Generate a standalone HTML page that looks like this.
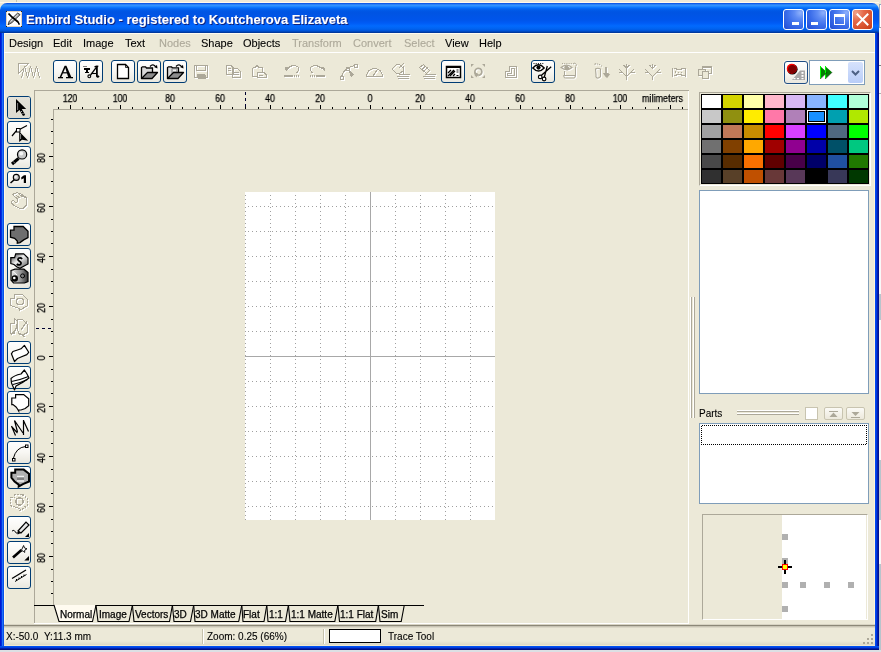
<!DOCTYPE html><html><head><meta charset="utf-8"><title>Embird</title><style>
*{margin:0;padding:0;box-sizing:border-box}
html,body{width:881px;height:652px;overflow:hidden;background:#ECE9D8;font-family:"Liberation Sans",sans-serif;font-size:11px;color:#000}
.a{position:absolute}
.t{position:absolute;white-space:nowrap;line-height:1;will-change:transform;-webkit-text-stroke:0.1px currentColor}
#title{position:absolute;left:0;top:3px;width:879px;height:30px;border-radius:7px 7px 0 0;
background:linear-gradient(to bottom,#0048e0 0px,#3593ff 2px,#288eff 3px,#127dff 4px,#036ffc 5px,#0262ee 6px,#0057e5 8px,#0054e3 10px,#0055eb 17px,#005bf5 20px,#026afe 23px,#0062ef 26px,#0052d6 28px,#0040ab 29px,#003092 30px)}
.wb{position:absolute;top:9px;width:21px;height:21px;border:1px solid #fff;border-radius:3px;
background:radial-gradient(circle at 85% 15%,#8EB0FB 0,#5F8CF4 25%,#3D6FEA 55%,#2A58DC 85%,#1E48CC 100%)}
.wc{background:radial-gradient(circle at 15% 15%,#F2A38A 0,#E5694A 35%,#D8502C 70%,#C23C18 100%)}
.dis{color:#ACA899}
.tb{position:absolute;top:60px;width:24px;height:23px;border:1px solid #003C74;border-radius:3px;background:linear-gradient(#FFFFFF,#F8F7F3 50%,#E9E7DE)}
.lb{position:absolute;left:7px;width:24px;border:1px solid #003C74;border-radius:3px;background:linear-gradient(#FFFFFF,#F8F7F3 50%,#E9E7DE)}
svg{position:absolute;overflow:visible}
.rt{position:absolute;font-size:10px;line-height:1;white-space:nowrap;-webkit-text-stroke:0.25px #000;will-change:transform}
.tab{position:absolute;top:610px;font-size:10px;line-height:1;white-space:nowrap;-webkit-text-stroke:0.25px #000;will-change:transform}
</style></head><body>
<div class="a" style="left:0;top:2px;width:879px;height:1px;background:#FFF8EA"></div>
<div class="a" style="left:16px;top:0;width:1px;height:2px;background:#C8C4B0"></div>
<div class="a" style="left:879px;top:0;width:2px;height:652px;background:#F8F8F8"></div>
<div class="a" style="left:879px;top:294px;width:2px;height:26px;background:#B8C4CC"></div>
<div class="a" style="left:879px;top:460px;width:2px;height:60px;background:#B8C4CC"></div>
<div class="a" style="left:879px;top:564px;width:2px;height:88px;background:#B8C4CC"></div>
<div class="a" style="left:879px;top:65px;width:2px;height:1px;background:#808080"></div>
<div class="a" style="left:879px;top:93px;width:2px;height:1px;background:#B0B0B0"></div>
<div class="a" style="left:879px;top:0;width:2px;height:4px;background:#ECE9D8"></div>
<div class="a" style="left:879px;top:4px;width:2px;height:1px;background:#8EA4C4"></div>
<div class="a" style="left:879px;top:5px;width:2px;height:22px;background:#FFFFFF;border-left:1px solid #98A8C0"></div>
<div class="a" style="left:879px;top:27px;width:2px;height:1px;background:#A0A0A0"></div>
<div class="a" style="left:0;top:650px;width:881px;height:2px;background:#DCE0E4"></div>
<div id="title"></div>
<div class="a" style="left:0;top:33px;width:4px;height:617px;background:linear-gradient(to right,#0018D0 0,#0018D0 1px,#0030E0 1px,#0030E0 2px,#2070F8 2px,#2070F8 3px,#0850E8 3px)"></div>
<div class="a" style="left:875px;top:33px;width:4px;height:617px;background:linear-gradient(to right,#0048F0 0,#0048F0 1px,#0038E0 1px,#0038E0 2px,#0020B0 2px,#0020B0 3px,#001090 3px)"></div>
<div class="a" style="left:0;top:646px;width:879px;height:4px;background:linear-gradient(to bottom,#0050F0 0,#0050F0 1px,#0040E0 1px,#0040E0 2px,#0020B0 2px,#0020B0 3px,#001080 3px)"></div>
<div class="a" style="left:4px;top:33px;width:871px;height:613px;background:#ECE9D8"></div>
<div class="a" style="left:4px;top:33px;width:871px;height:1px;background:#FFFBF0"></div>
<div class="a" style="left:4px;top:33px;width:1px;height:613px;background:#FFF8E4"></div>
<div class="a" style="left:874px;top:33px;width:1px;height:613px;background:#FFF4D8"></div>
<div class="a" style="left:6px;top:11px;width:16px;height:16px;background:#fff;border:1px solid #E4D4BC"></div>
<svg style="left:0;top:0" width="40" height="40"><g fill="#202020"><rect x="6" y="11" width="1" height="1"/><rect x="21" y="11" width="1" height="1"/><rect x="6" y="26" width="1" height="1"/><rect x="21" y="26" width="1" height="1"/></g><path d="M8,24.8 L9.2,21.2 L17.6,13.1 L20.2,14.6 L12,22.6 Z" fill="#A0A0A0" stroke="#202020" stroke-width="0.8"/><path d="M10.5,21.5 L18,14.5" stroke="#F0F0F0" stroke-width="0.9"/><path d="M8.5,13.5 Q12,17.5 15.2,19.6 Q18.6,21.6 19.3,24.6" fill="none" stroke="#000" stroke-width="1.8"/></svg>
<div class="t" style="left:26px;top:13px;color:#fff;font-weight:bold;font-size:13px;text-shadow:1px 1px 0 #0F1F78">Embird Studio - registered to Koutcherova Elizaveta</div>
<div class="wb" style="left:783px"></div>
<div class="wb" style="left:806px"></div>
<div class="wb" style="left:829px"></div>
<div class="wb wc" style="left:852px"></div>
<div class="a" style="left:792px;top:22px;width:7px;height:3px;background:#fff"></div>
<div class="a" style="left:811px;top:22px;width:7px;height:3px;background:#fff"></div>
<div class="a" style="left:834px;top:14px;width:11px;height:11px;border:1px solid #fff;border-top-width:3px"></div>
<svg style="left:852px;top:9px" width="21" height="21"><path d="M5.5,5.5 L15.5,15.5 M15.5,5.5 L5.5,15.5" stroke="#fff" stroke-width="2" stroke-linecap="square"/></svg>
<div class="t" style="left:9px;top:38px;font-size:11px;color:#000">Design</div>
<div class="t" style="left:53px;top:38px;font-size:11px;color:#000">Edit</div>
<div class="t" style="left:83px;top:38px;font-size:11px;color:#000">Image</div>
<div class="t" style="left:125px;top:38px;font-size:11px;color:#000">Text</div>
<div class="t" style="left:159px;top:38px;font-size:11px;color:#ACA899">Nodes</div>
<div class="t" style="left:201px;top:38px;font-size:11px;color:#000">Shape</div>
<div class="t" style="left:243px;top:38px;font-size:11px;color:#000">Objects</div>
<div class="t" style="left:292px;top:38px;font-size:11px;color:#ACA899">Transform</div>
<div class="t" style="left:353px;top:38px;font-size:11px;color:#ACA899">Convert</div>
<div class="t" style="left:404px;top:38px;font-size:11px;color:#ACA899">Select</div>
<div class="t" style="left:445px;top:38px;font-size:11px;color:#000">View</div>
<div class="t" style="left:479px;top:38px;font-size:11px;color:#000">Help</div>
<div class="a" style="left:4px;top:52px;width:871px;height:1px;background:#FFFFFF"></div>
<div class="tb" style="left:53px"></div>
<div class="tb" style="left:79px"></div>
<div class="tb" style="left:111px"></div>
<div class="tb" style="left:137px"></div>
<div class="tb" style="left:163px"></div>
<div class="tb" style="left:441px"></div>
<div class="tb" style="left:531px"></div>
<div class="tb" style="left:784px;top:61px;width:24px;height:23px;border-color:#1F4E85;box-shadow:0 0 0 1px #F4F2EA"></div>
<div class="a" style="left:809px;top:60px;width:56px;height:25px;background:#fff;border:1px solid #7F9DB9"></div>
<div class="a" style="left:848px;top:62px;width:15px;height:21px;border-radius:2px;background:linear-gradient(#D6E2FC,#B9CDF8)"></div>
<svg style="left:848px;top:62px" width="15" height="21"><path d="M4,9 L7.5,12.5 L11,9" stroke="#4D6185" stroke-width="2" fill="none"/></svg>
<svg style="left:0;top:0" width="881" height="100"><path d="M820,66 L827,72.3 L820,78.8 Z M825,66 L832,72.3 L825,78.8 Z" fill="#008000"/><path d="M820.5,66 V78.5 M825.5,66 V78.5" stroke="#00FF00" stroke-width="1"/><path d="M820.5,78.8 L827,72.3 M825.5,78.8 L832,72.3" stroke="#003000" stroke-width="0.8"/></svg>
<svg style="left:0;top:0" width="881" height="100"><path d="M792,80 L800,70.5 H805 V80 Z" fill="#A8A8A8"/><g fill="#fff"><rect x="801.5" y="72" width="2" height="1.8"/><rect x="801.5" y="75" width="2" height="1.8"/><rect x="801.5" y="78" width="2" height="1.2"/><rect x="793.5" y="78" width="2" height="1.2"/><rect x="797" y="78" width="2" height="1.2"/></g><circle cx="792.3" cy="69.2" r="5.3" fill="#000"/><circle cx="791.8" cy="68.7" r="5" fill="#FF0000"/><circle cx="792.3" cy="69.2" r="4.3" fill="#800000"/></svg>
<div class="lb" style="top:96px;height:23px"></div>
<div class="lb" style="top:121px;height:23px"></div>
<div class="lb" style="top:146px;height:23px"></div>
<div class="lb" style="top:171px;height:17px"></div>
<div class="lb" style="top:223px;height:23px"></div>
<div class="lb" style="top:248px;height:41px"></div>
<div class="lb" style="top:341px;height:23px"></div>
<div class="lb" style="top:366px;height:23px"></div>
<div class="lb" style="top:391px;height:23px"></div>
<div class="lb" style="top:416px;height:23px"></div>
<div class="lb" style="top:441px;height:23px"></div>
<div class="lb" style="top:466px;height:23px"></div>
<div class="lb" style="top:516px;height:23px"></div>
<div class="lb" style="top:541px;height:23px"></div>
<div class="lb" style="top:566px;height:23px"></div>
<div class="a" style="left:34px;top:90px;width:655px;height:1px;background:#ACA899"></div>
<div class="a" style="left:34px;top:90px;width:1px;height:533px;background:#ACA899"></div>
<div class="a" style="left:688px;top:91px;width:1px;height:532px;background:#FFFFFF"></div>
<div class="a" style="left:53px;top:109px;width:635px;height:1px;background:#ACA899"></div>
<div class="a" style="left:53px;top:109px;width:1px;height:496px;background:#ACA899"></div>
<div class="a" style="left:58px;top:107px;width:1px;height:2px;background:#000"></div><div class="a" style="left:70px;top:105px;width:1px;height:4px;background:#000"></div><div class="a" style="left:82px;top:107px;width:1px;height:2px;background:#000"></div><div class="a" style="left:95px;top:107px;width:1px;height:2px;background:#000"></div><div class="a" style="left:108px;top:107px;width:1px;height:2px;background:#000"></div><div class="a" style="left:120px;top:105px;width:1px;height:4px;background:#000"></div><div class="a" style="left:132px;top:107px;width:1px;height:2px;background:#000"></div><div class="a" style="left:145px;top:107px;width:1px;height:2px;background:#000"></div><div class="a" style="left:158px;top:107px;width:1px;height:2px;background:#000"></div><div class="a" style="left:170px;top:105px;width:1px;height:4px;background:#000"></div><div class="a" style="left:182px;top:107px;width:1px;height:2px;background:#000"></div><div class="a" style="left:195px;top:107px;width:1px;height:2px;background:#000"></div><div class="a" style="left:208px;top:107px;width:1px;height:2px;background:#000"></div><div class="a" style="left:220px;top:105px;width:1px;height:4px;background:#000"></div><div class="a" style="left:232px;top:107px;width:1px;height:2px;background:#000"></div><div class="a" style="left:245px;top:107px;width:1px;height:2px;background:#000"></div><div class="a" style="left:258px;top:107px;width:1px;height:2px;background:#000"></div><div class="a" style="left:270px;top:105px;width:1px;height:4px;background:#000"></div><div class="a" style="left:282px;top:107px;width:1px;height:2px;background:#000"></div><div class="a" style="left:295px;top:107px;width:1px;height:2px;background:#000"></div><div class="a" style="left:308px;top:107px;width:1px;height:2px;background:#000"></div><div class="a" style="left:320px;top:105px;width:1px;height:4px;background:#000"></div><div class="a" style="left:332px;top:107px;width:1px;height:2px;background:#000"></div><div class="a" style="left:345px;top:107px;width:1px;height:2px;background:#000"></div><div class="a" style="left:358px;top:107px;width:1px;height:2px;background:#000"></div><div class="a" style="left:370px;top:105px;width:1px;height:4px;background:#000"></div><div class="a" style="left:382px;top:107px;width:1px;height:2px;background:#000"></div><div class="a" style="left:395px;top:107px;width:1px;height:2px;background:#000"></div><div class="a" style="left:408px;top:107px;width:1px;height:2px;background:#000"></div><div class="a" style="left:420px;top:105px;width:1px;height:4px;background:#000"></div><div class="a" style="left:432px;top:107px;width:1px;height:2px;background:#000"></div><div class="a" style="left:445px;top:107px;width:1px;height:2px;background:#000"></div><div class="a" style="left:458px;top:107px;width:1px;height:2px;background:#000"></div><div class="a" style="left:470px;top:105px;width:1px;height:4px;background:#000"></div><div class="a" style="left:482px;top:107px;width:1px;height:2px;background:#000"></div><div class="a" style="left:495px;top:107px;width:1px;height:2px;background:#000"></div><div class="a" style="left:508px;top:107px;width:1px;height:2px;background:#000"></div><div class="a" style="left:520px;top:105px;width:1px;height:4px;background:#000"></div><div class="a" style="left:532px;top:107px;width:1px;height:2px;background:#000"></div><div class="a" style="left:545px;top:107px;width:1px;height:2px;background:#000"></div><div class="a" style="left:558px;top:107px;width:1px;height:2px;background:#000"></div><div class="a" style="left:570px;top:105px;width:1px;height:4px;background:#000"></div><div class="a" style="left:582px;top:107px;width:1px;height:2px;background:#000"></div><div class="a" style="left:595px;top:107px;width:1px;height:2px;background:#000"></div><div class="a" style="left:608px;top:107px;width:1px;height:2px;background:#000"></div><div class="a" style="left:620px;top:105px;width:1px;height:4px;background:#000"></div><div class="a" style="left:632px;top:107px;width:1px;height:2px;background:#000"></div><div class="a" style="left:645px;top:107px;width:1px;height:2px;background:#000"></div><div class="a" style="left:658px;top:107px;width:1px;height:2px;background:#000"></div><div class="a" style="left:670px;top:105px;width:1px;height:4px;background:#000"></div><div class="a" style="left:682px;top:107px;width:1px;height:2px;background:#000"></div><div class="a" style="left:51px;top:119px;width:2px;height:1px;background:#000"></div><div class="a" style="left:51px;top:131px;width:2px;height:1px;background:#000"></div><div class="a" style="left:51px;top:143px;width:2px;height:1px;background:#000"></div><div class="a" style="left:49px;top:156px;width:4px;height:1px;background:#000"></div><div class="a" style="left:51px;top:169px;width:2px;height:1px;background:#000"></div><div class="a" style="left:51px;top:181px;width:2px;height:1px;background:#000"></div><div class="a" style="left:51px;top:193px;width:2px;height:1px;background:#000"></div><div class="a" style="left:49px;top:206px;width:4px;height:1px;background:#000"></div><div class="a" style="left:51px;top:219px;width:2px;height:1px;background:#000"></div><div class="a" style="left:51px;top:231px;width:2px;height:1px;background:#000"></div><div class="a" style="left:51px;top:243px;width:2px;height:1px;background:#000"></div><div class="a" style="left:49px;top:256px;width:4px;height:1px;background:#000"></div><div class="a" style="left:51px;top:269px;width:2px;height:1px;background:#000"></div><div class="a" style="left:51px;top:281px;width:2px;height:1px;background:#000"></div><div class="a" style="left:51px;top:293px;width:2px;height:1px;background:#000"></div><div class="a" style="left:49px;top:306px;width:4px;height:1px;background:#000"></div><div class="a" style="left:51px;top:319px;width:2px;height:1px;background:#000"></div><div class="a" style="left:51px;top:331px;width:2px;height:1px;background:#000"></div><div class="a" style="left:51px;top:343px;width:2px;height:1px;background:#000"></div><div class="a" style="left:49px;top:356px;width:4px;height:1px;background:#000"></div><div class="a" style="left:51px;top:369px;width:2px;height:1px;background:#000"></div><div class="a" style="left:51px;top:381px;width:2px;height:1px;background:#000"></div><div class="a" style="left:51px;top:393px;width:2px;height:1px;background:#000"></div><div class="a" style="left:49px;top:406px;width:4px;height:1px;background:#000"></div><div class="a" style="left:51px;top:419px;width:2px;height:1px;background:#000"></div><div class="a" style="left:51px;top:431px;width:2px;height:1px;background:#000"></div><div class="a" style="left:51px;top:443px;width:2px;height:1px;background:#000"></div><div class="a" style="left:49px;top:456px;width:4px;height:1px;background:#000"></div><div class="a" style="left:51px;top:469px;width:2px;height:1px;background:#000"></div><div class="a" style="left:51px;top:481px;width:2px;height:1px;background:#000"></div><div class="a" style="left:51px;top:493px;width:2px;height:1px;background:#000"></div><div class="a" style="left:49px;top:506px;width:4px;height:1px;background:#000"></div><div class="a" style="left:51px;top:519px;width:2px;height:1px;background:#000"></div><div class="a" style="left:51px;top:531px;width:2px;height:1px;background:#000"></div><div class="a" style="left:51px;top:543px;width:2px;height:1px;background:#000"></div><div class="a" style="left:49px;top:556px;width:4px;height:1px;background:#000"></div><div class="a" style="left:51px;top:569px;width:2px;height:1px;background:#000"></div><div class="a" style="left:51px;top:581px;width:2px;height:1px;background:#000"></div><div class="a" style="left:51px;top:593px;width:2px;height:1px;background:#000"></div>
<div class="rt" style="left:40.0px;top:93.5px;width:60px;text-align:center;transform:scaleX(0.88)">120</div>
<div class="rt" style="left:90.0px;top:93.5px;width:60px;text-align:center;transform:scaleX(0.88)">100</div>
<div class="rt" style="left:140.0px;top:93.5px;width:60px;text-align:center;transform:scaleX(0.88)">80</div>
<div class="rt" style="left:190.0px;top:93.5px;width:60px;text-align:center;transform:scaleX(0.88)">60</div>
<div class="rt" style="left:240.0px;top:93.5px;width:60px;text-align:center;transform:scaleX(0.88)">40</div>
<div class="rt" style="left:290.0px;top:93.5px;width:60px;text-align:center;transform:scaleX(0.88)">20</div>
<div class="rt" style="left:340.0px;top:93.5px;width:60px;text-align:center;transform:scaleX(0.88)">0</div>
<div class="rt" style="left:390.0px;top:93.5px;width:60px;text-align:center;transform:scaleX(0.88)">20</div>
<div class="rt" style="left:440.0px;top:93.5px;width:60px;text-align:center;transform:scaleX(0.88)">40</div>
<div class="rt" style="left:490.0px;top:93.5px;width:60px;text-align:center;transform:scaleX(0.88)">60</div>
<div class="rt" style="left:540.0px;top:93.5px;width:60px;text-align:center;transform:scaleX(0.88)">80</div>
<div class="rt" style="left:590.0px;top:93.5px;width:60px;text-align:center;transform:scaleX(0.88)">100</div>
<div class="rt" style="left:642px;top:93.5px;transform-origin:0 0;transform:scaleX(0.9)">milimeters</div>
<div class="rt" style="left:12px;top:152.5px;width:60px;height:10px;text-align:center;transform-origin:30px 5px;transform:rotate(-90deg) scaleX(0.88)">80</div>
<div class="rt" style="left:12px;top:202.5px;width:60px;height:10px;text-align:center;transform-origin:30px 5px;transform:rotate(-90deg) scaleX(0.88)">60</div>
<div class="rt" style="left:12px;top:252.5px;width:60px;height:10px;text-align:center;transform-origin:30px 5px;transform:rotate(-90deg) scaleX(0.88)">40</div>
<div class="rt" style="left:12px;top:302.5px;width:60px;height:10px;text-align:center;transform-origin:30px 5px;transform:rotate(-90deg) scaleX(0.88)">20</div>
<div class="rt" style="left:12px;top:352.5px;width:60px;height:10px;text-align:center;transform-origin:30px 5px;transform:rotate(-90deg) scaleX(0.88)">0</div>
<div class="rt" style="left:12px;top:402.5px;width:60px;height:10px;text-align:center;transform-origin:30px 5px;transform:rotate(-90deg) scaleX(0.88)">20</div>
<div class="rt" style="left:12px;top:452.5px;width:60px;height:10px;text-align:center;transform-origin:30px 5px;transform:rotate(-90deg) scaleX(0.88)">40</div>
<div class="rt" style="left:12px;top:502.5px;width:60px;height:10px;text-align:center;transform-origin:30px 5px;transform:rotate(-90deg) scaleX(0.88)">60</div>
<div class="rt" style="left:12px;top:552.5px;width:60px;height:10px;text-align:center;transform-origin:30px 5px;transform:rotate(-90deg) scaleX(0.88)">80</div>
<svg style="left:0;top:0" width="881" height="652"><path d="M245.5,92 V107" stroke="#000030" stroke-width="1" stroke-dasharray="3 3"/><path d="M36,328.5 H51" stroke="#000030" stroke-width="1" stroke-dasharray="3 3"/></svg>
<div class="a" style="left:245px;top:192px;width:250px;height:328px;background:#fff"></div>
<svg style="left:0;top:0" width="881" height="652"><path d="M245.5,195V520M270.5,195V520M295.5,195V520M320.5,195V520M345.5,195V520M395.5,195V520M420.5,195V520M445.5,195V520M470.5,195V520" stroke="#A0A0A0" stroke-width="1" stroke-dasharray="1 3"/><path d="M248,206.5H495M248,231.5H495M248,256.5H495M248,281.5H495M248,306.5H495M248,331.5H495M248,381.5H495M248,406.5H495M248,431.5H495M248,456.5H495M248,481.5H495M248,506.5H495" stroke="#A0A0A0" stroke-width="1" stroke-dasharray="1 3"/><path d="M370.5,192V520M245,356.5H495" stroke="#A8A8A8" stroke-width="1"/></svg>
<div class="a" style="left:690px;top:297px;width:1px;height:121px;background:#fff"></div>
<div class="a" style="left:691px;top:297px;width:1px;height:121px;background:#ACA899"></div>
<div class="a" style="left:693px;top:297px;width:1px;height:121px;background:#fff"></div>
<div class="a" style="left:694px;top:297px;width:1px;height:121px;background:#ACA899"></div>
<div class="a" style="left:699px;top:92px;width:172px;height:94px;border:1px solid;border-color:#ACA899 #fff #fff #ACA899"></div>
<div class="a" style="left:701px;top:94px;width:168px;height:90px;background:#000"></div>
<div class="a" style="left:702px;top:95px;width:19px;height:13px;background:#FFFFFF"></div>
<div class="a" style="left:723px;top:95px;width:19px;height:13px;background:#D4D400"></div>
<div class="a" style="left:744px;top:95px;width:19px;height:13px;background:#FFFFA8"></div>
<div class="a" style="left:765px;top:95px;width:19px;height:13px;background:#FFB8CC"></div>
<div class="a" style="left:786px;top:95px;width:19px;height:13px;background:#D8B8F4"></div>
<div class="a" style="left:807px;top:95px;width:19px;height:13px;background:#88B4FF"></div>
<div class="a" style="left:828px;top:95px;width:19px;height:13px;background:#40FFFF"></div>
<div class="a" style="left:849px;top:95px;width:19px;height:13px;background:#B0FFD8"></div>
<div class="a" style="left:702px;top:110px;width:19px;height:13px;background:#C8C8C8"></div>
<div class="a" style="left:723px;top:110px;width:19px;height:13px;background:#909010"></div>
<div class="a" style="left:744px;top:110px;width:19px;height:13px;background:#FFEC00"></div>
<div class="a" style="left:765px;top:110px;width:19px;height:13px;background:#FF78A8"></div>
<div class="a" style="left:786px;top:110px;width:19px;height:13px;background:#B080B8"></div>
<div class="a" style="left:807px;top:110px;width:19px;height:13px;background:#1890FF"></div>
<div class="a" style="left:828px;top:110px;width:19px;height:13px;background:#00A0B0"></div>
<div class="a" style="left:849px;top:110px;width:19px;height:13px;background:#B0E800"></div>
<div class="a" style="left:702px;top:125px;width:19px;height:13px;background:#A0A0A0"></div>
<div class="a" style="left:723px;top:125px;width:19px;height:13px;background:#C07858"></div>
<div class="a" style="left:744px;top:125px;width:19px;height:13px;background:#C88C00"></div>
<div class="a" style="left:765px;top:125px;width:19px;height:13px;background:#FF0000"></div>
<div class="a" style="left:786px;top:125px;width:19px;height:13px;background:#D840FF"></div>
<div class="a" style="left:807px;top:125px;width:19px;height:13px;background:#0000FF"></div>
<div class="a" style="left:828px;top:125px;width:19px;height:13px;background:#506880"></div>
<div class="a" style="left:849px;top:125px;width:19px;height:13px;background:#00FF00"></div>
<div class="a" style="left:702px;top:140px;width:19px;height:13px;background:#707070"></div>
<div class="a" style="left:723px;top:140px;width:19px;height:13px;background:#804000"></div>
<div class="a" style="left:744px;top:140px;width:19px;height:13px;background:#FFA800"></div>
<div class="a" style="left:765px;top:140px;width:19px;height:13px;background:#A00000"></div>
<div class="a" style="left:786px;top:140px;width:19px;height:13px;background:#900090"></div>
<div class="a" style="left:807px;top:140px;width:19px;height:13px;background:#0000A8"></div>
<div class="a" style="left:828px;top:140px;width:19px;height:13px;background:#005068"></div>
<div class="a" style="left:849px;top:140px;width:19px;height:13px;background:#00C880"></div>
<div class="a" style="left:702px;top:155px;width:19px;height:13px;background:#484848"></div>
<div class="a" style="left:723px;top:155px;width:19px;height:13px;background:#582C00"></div>
<div class="a" style="left:744px;top:155px;width:19px;height:13px;background:#F87000"></div>
<div class="a" style="left:765px;top:155px;width:19px;height:13px;background:#600000"></div>
<div class="a" style="left:786px;top:155px;width:19px;height:13px;background:#480048"></div>
<div class="a" style="left:807px;top:155px;width:19px;height:13px;background:#000068"></div>
<div class="a" style="left:828px;top:155px;width:19px;height:13px;background:#2050A0"></div>
<div class="a" style="left:849px;top:155px;width:19px;height:13px;background:#207800"></div>
<div class="a" style="left:702px;top:170px;width:19px;height:13px;background:#303030"></div>
<div class="a" style="left:723px;top:170px;width:19px;height:13px;background:#584028"></div>
<div class="a" style="left:744px;top:170px;width:19px;height:13px;background:#C05000"></div>
<div class="a" style="left:765px;top:170px;width:19px;height:13px;background:#683838"></div>
<div class="a" style="left:786px;top:170px;width:19px;height:13px;background:#583858"></div>
<div class="a" style="left:807px;top:170px;width:19px;height:13px;background:#000000"></div>
<div class="a" style="left:828px;top:170px;width:19px;height:13px;background:#383858"></div>
<div class="a" style="left:849px;top:170px;width:19px;height:13px;background:#003800"></div>
<div class="a" style="left:807px;top:110px;width:19px;height:13px;border:1px solid #fff;box-shadow:inset 0 0 0 1px #000"></div>
<div class="a" style="left:699px;top:190px;width:170px;height:204px;background:#fff;border:1px solid #7F9DB9"></div>
<div class="t" style="left:699px;top:409px;font-size:10px">Parts</div>
<div class="a" style="left:737px;top:410px;width:62px;height:1px;background:#fff"></div>
<div class="a" style="left:737px;top:411px;width:62px;height:1px;background:#ACA899"></div>
<div class="a" style="left:737px;top:413px;width:62px;height:1px;background:#fff"></div>
<div class="a" style="left:737px;top:414px;width:62px;height:1px;background:#ACA899"></div>
<div class="a" style="left:805px;top:407px;width:13px;height:13px;background:#fff;border:1px solid #C8C4B0"></div>
<div class="a" style="left:824px;top:407px;width:19px;height:13px;border:1px solid #C8C4B0;border-radius:2px;background:linear-gradient(#FBFAF6,#ECE9DC)"></div>
<div class="a" style="left:846px;top:407px;width:19px;height:13px;border:1px solid #C8C4B0;border-radius:2px;background:linear-gradient(#FBFAF6,#ECE9DC)"></div>
<svg style="left:824px;top:407px" width="19" height="13"><path d="M5.5,10 L9.5,5.5 L13.5,10 Z" fill="#ACA899"/><path d="M5,4.5 H14" stroke="#ACA899"/></svg>
<svg style="left:846px;top:407px" width="19" height="13"><path d="M5.5,5 L9.5,9 L13.5,5 Z" fill="#ACA899"/><path d="M5,10.5 H14" stroke="#ACA899"/></svg>
<div class="a" style="left:699px;top:423px;width:170px;height:81px;background:#fff;border:1px solid #7F9DB9"></div>
<svg style="left:0;top:0" width="881" height="652"><path d="M702,425.5H867M701,444.5H867M701.5,426V445M866.5,425V445" fill="none" stroke="#000" stroke-width="1" stroke-dasharray="1 1" shape-rendering="crispEdges"/></svg>
<div class="a" style="left:702px;top:514px;width:166px;height:106px;border:1px solid;border-color:#ACA899 #fff #fff #ACA899"></div>
<div class="a" style="left:782px;top:515px;width:84px;height:104px;background:#fff"></div>
<div class="a" style="left:782px;top:534px;width:6px;height:6px;background:#B0B0B0"></div>
<div class="a" style="left:782px;top:558px;width:6px;height:6px;background:#B0B0B0"></div>
<div class="a" style="left:782px;top:582px;width:6px;height:6px;background:#B0B0B0"></div>
<div class="a" style="left:800px;top:582px;width:6px;height:6px;background:#B0B0B0"></div>
<div class="a" style="left:824px;top:582px;width:6px;height:6px;background:#B0B0B0"></div>
<div class="a" style="left:848px;top:582px;width:6px;height:6px;background:#B0B0B0"></div>
<div class="a" style="left:782px;top:606px;width:6px;height:6px;background:#B0B0B0"></div>
<svg style="left:778px;top:560px" width="14" height="14"><path d="M0,7 H14 M7,0 V14" stroke="#000" stroke-width="2"/><rect x="4" y="4" width="6" height="6" fill="#FF0000"/><rect x="5" y="5" width="4" height="4" fill="#FFFF00"/></svg>
<svg style="left:0px;top:0px" width="60" height="90" shape-rendering="crispEdges"><g transform="translate(1,1)" stroke="#fff" fill="none" stroke-width="1"><path d="M18.5,63.5 H28.5 L18.5,73.5 Z"/><path d="M21.5,78 L24.5,66 L27.5,78 L30.5,66 L33.5,78 L36.5,66 L39.5,78"/></g><g stroke="#ACA899" fill="none" stroke-width="1"><path d="M18.5,63.5 H28.5 L18.5,73.5 Z"/><path d="M21.5,78 L24.5,66 L27.5,78 L30.5,66 L33.5,78 L36.5,66 L39.5,78"/></g></svg>
<svg style="left:0px;top:0px" width="100" height="90"><rect x="58" y="77" width="5" height="1.3" fill="#000"/><rect x="66" y="77" width="7" height="1.3" fill="#000"/><path d="M65.2,66.3 L60.4,77.3" stroke="#000" stroke-width="1.5"/><path d="M64.6,65.8 H66.4 L71.4,77.3 H68.2 Z" fill="#000"/><rect x="62.6" y="72.2" width="5.2" height="1.2" fill="#000"/></svg>
<svg style="left:0px;top:0px" width="110" height="90"><rect x="83" y="66" width="4" height="1" fill="#808080"/><rect x="84" y="68" width="6" height="2" fill="#000"/><rect x="86" y="68" width="2" height="5" fill="#000"/><rect x="85" y="72" width="4" height="1" fill="#000"/><path d="M94.5,67 Q96.5,65.8 98.3,66.5" fill="none" stroke="#000" stroke-width="1.4"/><path d="M96.9,67 V76.3 Q97.4,77.6 98.9,75.8" fill="none" stroke="#000" stroke-width="1.8"/><path d="M96.5,67.2 L90.6,75" fill="none" stroke="#000" stroke-width="1.3"/><circle cx="89.3" cy="76.3" r="1.4" fill="none" stroke="#000" stroke-width="1.1"/><path d="M91.8,73.5 H96.8" stroke="#000" stroke-width="1.1"/></svg>
<svg style="left:0px;top:0px" width="200" height="90"><path d="M117.5,64.5 H125.5 L128.5,67.5 V78.5 H117.5 Z" fill="#fff" stroke="#000" stroke-width="1.3"/><path d="M125.5,64.5 V67.5 H128.5" fill="none" stroke="#000" stroke-width="0.8"/></svg>
<svg style="left:0px;top:0px" width="200" height="90"><g transform="translate(0,0)"><path d="M141.5,78.5 V67.5 L142.5,66.8 H145.5 L146.5,68 H152.5 V72.5" fill="#D8D8D8" stroke="#000" stroke-width="1.3"/><path d="M141.5,78.5 L147.5,72.5 H157.5 L152,78.5 Z" fill="#8C8C8C" stroke="#000" stroke-width="1.3" stroke-linejoin="round"/><path d="M150,66.5 Q153,63 156,67" fill="none" stroke="#000" stroke-width="1.2"/><path d="M154,67 L157.5,68.5 L157,65 Z" fill="#000"/></g><g transform="translate(26,0)"><path d="M141.5,78.5 V67.5 L142.5,66.8 H145.5 L146.5,68 H152.5 V72.5" fill="#D8D8D8" stroke="#000" stroke-width="1.3"/><rect x="145" y="68.5" width="7" height="5" fill="#A8A8A8"/><rect x="147" y="69.5" width="3" height="2" fill="#F0F0F0"/><path d="M141.5,78.5 L147.5,72.5 H157.5 L152,78.5 Z" fill="#8C8C8C" stroke="#000" stroke-width="1.3" stroke-linejoin="round"/><path d="M150,66.5 Q153,63 156,67" fill="none" stroke="#000" stroke-width="1.2"/><path d="M154,67 L157.5,68.5 L157,65 Z" fill="#000"/></g></svg>
<svg style="left:0px;top:0px" width="220" height="90" shape-rendering="crispEdges"><g transform="translate(1,1)" stroke="#fff" fill="none" stroke-width="1"><path d="M194.5,65.5 H207.5 V77.5 H194.5 Z M196.5,65.5 V70.5 H205.5 V65.5"/><rect x="197" y="74" width="8" height="3.5" fill="#ACA899" stroke="none"/></g><g stroke="#ACA899" fill="none" stroke-width="1"><path d="M194.5,65.5 H207.5 V77.5 H194.5 Z M196.5,65.5 V70.5 H205.5 V65.5"/><rect x="197" y="74" width="8" height="3.5" fill="#ACA899" stroke="none"/></g></svg>
<svg style="left:0px;top:0px" width="250" height="90" shape-rendering="crispEdges"><g transform="translate(1,1)" stroke="#fff" fill="none" stroke-width="1"><path d="M226.5,65.5 H231 L233.5,68 V74.5 H226.5 Z M228,68.5 H231 M228,70.5 H231"/><path d="M232.5,68.5 H237.5 L240.5,71.5 V77.5 H232.5 Z M234,72.5 H239 M234,74.5 H239"/></g><g stroke="#ACA899" fill="none" stroke-width="1"><path d="M226.5,65.5 H231 L233.5,68 V74.5 H226.5 Z M228,68.5 H231 M228,70.5 H231"/><path d="M232.5,68.5 H237.5 L240.5,71.5 V77.5 H232.5 Z M234,72.5 H239 M234,74.5 H239"/></g></svg>
<svg style="left:0px;top:0px" width="280" height="90" shape-rendering="crispEdges"><g transform="translate(1,1)" stroke="#fff" fill="none" stroke-width="1"><path d="M252.5,67.5 H255 L257,65.5 L259,67.5 H262.5 V72 M257.5,76.5 H252.5 V67.5"/><path d="M257.5,72.5 H264 L266.5,75 V77.5 H257.5 Z M259,75.5 H263"/></g><g stroke="#ACA899" fill="none" stroke-width="1"><path d="M252.5,67.5 H255 L257,65.5 L259,67.5 H262.5 V72 M257.5,76.5 H252.5 V67.5"/><path d="M257.5,72.5 H264 L266.5,75 V77.5 H257.5 Z M259,75.5 H263"/></g></svg>
<svg style="left:0px;top:0px" width="300" height="90" shape-rendering="crispEdges"><g transform="translate(1,1)" stroke="#fff" fill="none" stroke-width="1"><path d="M287,69 Q293,63 298,67 Q300,71 296,73"/><path d="M285,66.5 L289,66.5 L285,70.5 Z" fill="#ACA899" stroke="none"/><path d="M284,76 H293" stroke-width="2"/><path d="M294,76 H299" stroke-width="2" stroke-dasharray="1 1"/></g><g stroke="#ACA899" fill="none" stroke-width="1"><path d="M287,69 Q293,63 298,67 Q300,71 296,73"/><path d="M285,66.5 L289,66.5 L285,70.5 Z" fill="#ACA899" stroke="none"/><path d="M284,76 H293" stroke-width="2"/><path d="M294,76 H299" stroke-width="2" stroke-dasharray="1 1"/></g></svg>
<svg style="left:0px;top:0px" width="330" height="90" shape-rendering="crispEdges"><g transform="translate(1,1)" stroke="#fff" fill="none" stroke-width="1"><path d="M322,69 Q316,63 311,67 Q309,71 313,73"/><path d="M324,66.5 L320,66.5 L324,70.5 Z" fill="#ACA899" stroke="none"/><path d="M316,76 H325" stroke-width="2"/><path d="M310,76 H315" stroke-width="2" stroke-dasharray="1 1"/></g><g stroke="#ACA899" fill="none" stroke-width="1"><path d="M322,69 Q316,63 311,67 Q309,71 313,73"/><path d="M324,66.5 L320,66.5 L324,70.5 Z" fill="#ACA899" stroke="none"/><path d="M316,76 H325" stroke-width="2"/><path d="M310,76 H315" stroke-width="2" stroke-dasharray="1 1"/></g></svg>
<svg style="left:0px;top:0px" width="360" height="90" shape-rendering="crispEdges"><g transform="translate(1,1)" stroke="#fff" fill="none" stroke-width="1"><path d="M341.5,77 Q343,71 347.5,68.5 Q351,66 355.5,65.5"/><rect x="340.5" y="76.5" width="2.5" height="2.5"/><rect x="346.5" y="67.5" width="2.5" height="2.5"/><rect x="354.5" y="64.5" width="2.5" height="2.5"/><path d="M349,70 L354,74 L351.5,74.5 L350,76.5 Z" fill="#ACA899" stroke="none"/></g><g stroke="#ACA899" fill="none" stroke-width="1"><path d="M341.5,77 Q343,71 347.5,68.5 Q351,66 355.5,65.5"/><rect x="340.5" y="76.5" width="2.5" height="2.5"/><rect x="346.5" y="67.5" width="2.5" height="2.5"/><rect x="354.5" y="64.5" width="2.5" height="2.5"/><path d="M349,70 L354,74 L351.5,74.5 L350,76.5 Z" fill="#ACA899" stroke="none"/></g></svg>
<svg style="left:0px;top:0px" width="390" height="90" shape-rendering="crispEdges"><g transform="translate(1,1)" stroke="#fff" fill="none" stroke-width="1"><path d="M366.5,76.5 A8,8 0 0 1 382.5,76.5 Z"/><path d="M373,76 L377,70"/></g><g stroke="#ACA899" fill="none" stroke-width="1"><path d="M366.5,76.5 A8,8 0 0 1 382.5,76.5 Z"/><path d="M373,76 L377,70"/></g></svg>
<svg style="left:0px;top:0px" width="420" height="90" shape-rendering="crispEdges"><g transform="translate(1,1)" stroke="#fff" fill="none" stroke-width="1"><path d="M396.5,64.5 H399.5 L403.5,68.5 V70.5 L399.5,73.5 H396.5 L392.5,69.5 V68.5 Z"/><path d="M398.5,68.5 L403.5,63.5 M403.5,65.5 V73.5"/><path d="M399,74.5 H410 M396.5,76.5 H409 M397.5,78.5 H409"/></g><g stroke="#ACA899" fill="none" stroke-width="1"><path d="M396.5,64.5 H399.5 L403.5,68.5 V70.5 L399.5,73.5 H396.5 L392.5,69.5 V68.5 Z"/><path d="M398.5,68.5 L403.5,63.5 M403.5,65.5 V73.5"/><path d="M399,74.5 H410 M396.5,76.5 H409 M397.5,78.5 H409"/></g></svg>
<svg style="left:0px;top:0px" width="440" height="90" shape-rendering="crispEdges"><g transform="translate(1,1)" stroke="#fff" fill="none" stroke-width="1"><path d="M423.5,64.5 L429.5,70.5 L426.5,73.5 L419.5,67.5 Z M421.5,69.5 L426.5,65.5 M423.5,71.5 L428,67.5"/><path d="M425,74.5 H436 M422.5,76.5 H435 M423.5,78.5 H435"/></g><g stroke="#ACA899" fill="none" stroke-width="1"><path d="M423.5,64.5 L429.5,70.5 L426.5,73.5 L419.5,67.5 Z M421.5,69.5 L426.5,65.5 M423.5,71.5 L428,67.5"/><path d="M425,74.5 H436 M422.5,76.5 H435 M423.5,78.5 H435"/></g></svg>
<svg style="left:0px;top:0px" width="470" height="90"><rect x="446.5" y="66.5" width="14" height="11" fill="#fff" stroke="#000" stroke-width="1.5"/><rect x="446" y="66" width="15" height="2" fill="#000"/><path d="M448,73 L451,70 M448,76 L454,70 M450,76 L455,71 M453,76 L455,74" stroke="#000" stroke-width="1.3"/><rect x="456.5" y="69" width="2" height="4" fill="#909090"/><rect x="456.5" y="75" width="2" height="1" fill="#000"/></svg>
<svg style="left:0px;top:0px" width="490" height="90"><g fill="#ACA899"><path d="M471,64 H474 L471,67 Z M485,64 V67 L482,64 Z M471,78 V75 L474,78 Z M485,78 H482 L485,75 Z"/></g></svg>
<svg style="left:0px;top:0px" width="490" height="90"><g transform="translate(1,1)" stroke="#fff" fill="none" stroke-width="1"><path d="M475.3,73.5 A3.5,3.5 0 1 1 478.3,75.3" stroke-width="1.7"/><path d="M474,72 L478,73.5 L475,76.5 Z" fill="#ACA899" stroke="none"/></g><g stroke="#ACA899" fill="none" stroke-width="1"><path d="M475.3,73.5 A3.5,3.5 0 1 1 478.3,75.3" stroke-width="1.7"/><path d="M474,72 L478,73.5 L475,76.5 Z" fill="#ACA899" stroke="none"/></g></svg>
<svg style="left:0px;top:0px" width="520" height="90" shape-rendering="crispEdges"><g transform="translate(1,1)" stroke="#fff" fill="none" stroke-width="1"><path d="M505.5,71.5 H509.5 V66.5 H516.5 V77.5 H505.5 Z M507.5,73.5 H511.5 V68.5 H514.5 V75.5 H507.5 Z"/></g><g stroke="#ACA899" fill="none" stroke-width="1"><path d="M505.5,71.5 H509.5 V66.5 H516.5 V77.5 H505.5 Z M507.5,73.5 H511.5 V68.5 H514.5 V75.5 H507.5 Z"/></g></svg>
<svg style="left:0px;top:0px" width="560" height="90"><path d="M532.8,68 Q538.5,61.5 544.2,68 Q538.5,74 532.8,68 Z" fill="#fff" stroke="#000" stroke-width="1.3"/><circle cx="538.5" cy="67.6" r="2.1" fill="#000"/><path d="M533.5,63.5 H543.5" stroke="#000" stroke-width="0.9" stroke-dasharray="1 1.2" fill="none"/><path d="M541.5,75.2 L551.2,66.8 M544.3,77.2 L547.3,66" stroke="#000" stroke-width="1.3"/><circle cx="540.2" cy="76.9" r="1.8" fill="#fff" stroke="#000" stroke-width="1.2"/><circle cx="544.1" cy="79" r="1.8" fill="#fff" stroke="#000" stroke-width="1.2"/></svg>
<svg style="left:0px;top:0px" width="590" height="90"><g transform="translate(1,1)" stroke="#fff" fill="none" stroke-width="1"><path d="M561,67.5 Q566.5,62.8 572,67.5 Q566.5,72 561,67.5 Z" stroke-width="1.1"/><circle cx="566.3" cy="67.5" r="2" fill="#ACA899" stroke="none"/><path d="M562,63.5 H572" stroke-dasharray="1 1.2"/><path d="M564.5,71 V75 M575.5,66.5 V76.5 M573,64 Q574,62.5 575.5,63.5 Q577,64.5 576,66" /><path d="M563.5,75.5 H575.5 L574.5,78 H564.5 Z"/></g><g stroke="#ACA899" fill="none" stroke-width="1"><path d="M561,67.5 Q566.5,62.8 572,67.5 Q566.5,72 561,67.5 Z" stroke-width="1.1"/><circle cx="566.3" cy="67.5" r="2" fill="#ACA899" stroke="none"/><path d="M562,63.5 H572" stroke-dasharray="1 1.2"/><path d="M564.5,71 V75 M575.5,66.5 V76.5 M573,64 Q574,62.5 575.5,63.5 Q577,64.5 576,66" /><path d="M563.5,75.5 H575.5 L574.5,78 H564.5 Z"/></g></svg>
<svg style="left:0px;top:0px" width="620" height="90"><g transform="translate(1,1)" stroke="#fff" fill="none" stroke-width="1"><path d="M595.5,69 Q597.5,67.5 600.5,69 V76.5 Q599,78.5 597,78 Q595.3,77 596,75 Z" stroke-width="1.1"/><path d="M594.5,64.5 L596,63.5 M597.5,63.5 V64.5 M599.5,64 V65 M601.5,65.5 V66.5" stroke-width="1.2"/><path d="M606,67 V74" stroke-width="1.8"/><path d="M602.8,73 H609.2 L606,77.2 Z" fill="#ACA899" stroke="none"/></g><g stroke="#ACA899" fill="none" stroke-width="1"><path d="M595.5,69 Q597.5,67.5 600.5,69 V76.5 Q599,78.5 597,78 Q595.3,77 596,75 Z" stroke-width="1.1"/><path d="M594.5,64.5 L596,63.5 M597.5,63.5 V64.5 M599.5,64 V65 M601.5,65.5 V66.5" stroke-width="1.2"/><path d="M606,67 V74" stroke-width="1.8"/><path d="M602.8,73 H609.2 L606,77.2 Z" fill="#ACA899" stroke="none"/></g></svg>
<svg style="left:0px;top:0px" width="640" height="90" shape-rendering="crispEdges"><g transform="translate(1,1)" stroke="#fff" fill="none" stroke-width="1"><path d="M626.5,64 V80 M623.5,65 L626.5,68 L629.5,65 M619.5,69.5 L622.5,72.5 M618.5,72.5 H622.5 L626.5,76.5 M633.5,69.5 L630.5,72.5 M634.5,72.5 H630.5 L626.5,76.5"/></g><g stroke="#ACA899" fill="none" stroke-width="1"><path d="M626.5,64 V80 M623.5,65 L626.5,68 L629.5,65 M619.5,69.5 L622.5,72.5 M618.5,72.5 H622.5 L626.5,76.5 M633.5,69.5 L630.5,72.5 M634.5,72.5 H630.5 L626.5,76.5"/></g></svg>
<svg style="left:0px;top:0px" width="670" height="90" shape-rendering="crispEdges"><g transform="translate(1,1)" stroke="#fff" fill="none" stroke-width="1"><path d="M652.5,76 V80 M652.5,64 V68.5 M649.5,65 L652.5,68.5 L655.5,65 M645.5,69.5 L648.5,72.5 M644.5,72.5 H648.5 L652.5,76.5 M659.5,69.5 L656.5,72.5 M660.5,72.5 H656.5 L652.5,76.5"/></g><g stroke="#ACA899" fill="none" stroke-width="1"><path d="M652.5,76 V80 M652.5,64 V68.5 M649.5,65 L652.5,68.5 L655.5,65 M645.5,69.5 L648.5,72.5 M644.5,72.5 H648.5 L652.5,76.5 M659.5,69.5 L656.5,72.5 M660.5,72.5 H656.5 L652.5,76.5"/></g></svg>
<svg style="left:0px;top:0px" width="700" height="90" shape-rendering="crispEdges"><g transform="translate(1,1)" stroke="#fff" fill="none" stroke-width="1"><path d="M672.5,67.5 V76.5 M685.5,67.5 V76.5 M673.5,68.5 H675.5 L677.5,69.5 H680.5 L682.5,68.5 H684.5 M673.5,75.5 H675.5 L677.5,74.5 H680.5 L682.5,75.5 H684.5 M675.5,71 V73 M678.5,71.5 V72.5 M681.5,71.5 V72.5"/></g><g stroke="#ACA899" fill="none" stroke-width="1"><path d="M672.5,67.5 V76.5 M685.5,67.5 V76.5 M673.5,68.5 H675.5 L677.5,69.5 H680.5 L682.5,68.5 H684.5 M673.5,75.5 H675.5 L677.5,74.5 H680.5 L682.5,75.5 H684.5 M675.5,71 V73 M678.5,71.5 V72.5 M681.5,71.5 V72.5"/></g></svg>
<svg style="left:0px;top:0px" width="720" height="90" shape-rendering="crispEdges"><g transform="translate(1,1)" stroke="#fff" fill="none" stroke-width="1"><rect x="702.5" y="66.5" width="9" height="6.5"/><path d="M702.5,67.5 H711.5" /><rect x="698.5" y="69.5" width="7" height="5.5" fill="#ECE9D8"/><rect x="702.5" y="71.5" width="6" height="7" fill="#ECE9D8"/></g><g stroke="#ACA899" fill="none" stroke-width="1"><rect x="702.5" y="66.5" width="9" height="6.5"/><path d="M702.5,67.5 H711.5" /><rect x="698.5" y="69.5" width="7" height="5.5" fill="#ECE9D8"/><rect x="702.5" y="71.5" width="6" height="7" fill="#ECE9D8"/></g></svg>
<div class="a" style="left:8px;top:97px;width:22px;height:21px;border-radius:2px;background:linear-gradient(#E4E2D8,#DCDAD0)"></div>
<svg style="left:0px;top:0px" width="40" height="200"><path d="M16,99 V113 L19.5,110 L23,116 L25.2,115 L21.8,109 H26.2 Z" fill="#000"/><path d="M17.6,103 V110" stroke="#909090" stroke-width="0.9"/><path d="M21,111 L22,112 M22.5,113 L23.5,114" stroke="#E0E0E0" stroke-width="0.8"/></svg>
<svg style="left:0px;top:0px" width="40" height="200"><path d="M12,136 L17,130 M19.5,129.5 L27,125.5" fill="none" stroke="#000" stroke-width="1.2"/><rect x="16.5" y="128.5" width="3.5" height="3.5" fill="#fff" stroke="#000" stroke-width="1"/><path d="M19.2,131.5 V142 L22,139.8 L28.2,140.8 Z" fill="#000"/><path d="M20.6,134 V139" stroke="#B0B0B0" stroke-width="0.8"/></svg>
<svg style="left:0px;top:0px" width="40" height="200"><path d="M18.6,158.4 L12,164" stroke="#000" stroke-width="3.2"/><path d="M13,161.5 L15.5,163.5" stroke="#808080" stroke-width="0.8"/><circle cx="22.1" cy="154.4" r="4.6" fill="#C8C8C8" stroke="#000" stroke-width="1.2"/><circle cx="21.2" cy="153.5" r="2" fill="#F4F4F4"/></svg>
<svg style="left:0px;top:0px" width="40" height="200"><path d="M14.5,179.5 L10.5,183" stroke="#000" stroke-width="1.6"/><circle cx="16.3" cy="177.4" r="3" fill="#C8C8C8" stroke="#000" stroke-width="1.1"/><circle cx="15.7" cy="176.8" r="1.2" fill="#F4F4F4"/><path d="M21.3,177.2 L24,175.2 H26 V182.9 H23.8 V178.2 L21.3,179.4 Z" fill="#000"/></svg>
<svg style="left:0px;top:0px" width="40" height="220" shape-rendering="crispEdges"><g transform="translate(1,1)" stroke="#fff" fill="none" stroke-width="1"><path d="M12.5,194.5 L17,192.5 L21,194 L26.5,197.5 V205 L23,208.5 L19,208 L14,205.5 L11.5,203 V201.5 L13,200 L15,202 L17,202.5 L17.5,199 Z"/><path d="M16,195 L20.5,198.5 M19,194 L23.5,197.5 M22,195 L25.5,198"/></g><g stroke="#ACA899" fill="none" stroke-width="1"><path d="M12.5,194.5 L17,192.5 L21,194 L26.5,197.5 V205 L23,208.5 L19,208 L14,205.5 L11.5,203 V201.5 L13,200 L15,202 L17,202.5 L17.5,199 Z"/><path d="M16,195 L20.5,198.5 M19,194 L23.5,197.5 M22,195 L25.5,198"/></g></svg>
<svg style="left:0px;top:0px" width="40" height="260"><path d="M10.5,230.2 H14 V226.5 H23.2 L28,231.3 V237.7 L23.7,239.9 L20,242.6 L17.3,243.1 V241 L14.6,238.3 L10.5,237.2 Z" fill="#6E6E6E" stroke="#000" stroke-width="1.3"/></svg>
<svg style="left:0px;top:0px" width="40" height="300"><defs><linearGradient id="hg" x1="0" y1="0" x2="1" y2="1"><stop offset="0" stop-color="#303030"/><stop offset="0.45" stop-color="#F0F0F0"/><stop offset="1" stop-color="#505050"/></linearGradient><linearGradient id="cg" x1="0" y1="0" x2="1" y2="0"><stop offset="0" stop-color="#E8E8E8"/><stop offset="0.6" stop-color="#909090"/><stop offset="1" stop-color="#303030"/></linearGradient></defs><path d="M10.8,257.6 H14.6 L15.7,253.8 H23.7 L28,258.1 V264 L23.7,266.2 L20,268.3 L17,267 L14,264.5 L10.8,263.5 Z" fill="url(#hg)" stroke="#000" stroke-width="1.2"/><path d="M22.2,258.8 Q20.5,257.3 18.5,258.3 Q17,259.8 19.5,261.2 Q22,262.6 20.5,264.5 Q18.5,265.6 16.8,264" fill="none" stroke="#000" stroke-width="1.8"/><path d="M11,270.5 L15,269.2 H24 L28,272.5 V281.5 L24.5,283 H13.5 L11,280 Z" fill="url(#cg)" stroke="#000" stroke-width="1.2"/><circle cx="14.8" cy="278.5" r="3.2" fill="#000"/><circle cx="14.3" cy="278" r="1.3" fill="#fff"/><circle cx="22.6" cy="275.9" r="2" fill="none" stroke="#000" stroke-width="1"/><path d="M13,271.5 L17,275" stroke="#fff" stroke-width="1"/></svg>
<svg style="left:0px;top:0px" width="40" height="320" shape-rendering="crispEdges"><g transform="translate(1,1)" stroke="#fff" fill="none" stroke-width="1"><path d="M10.5,298.5 H14.5 V294.5 H22.5 L27.5,299.5 V305.5 L19.5,310.5 V308.5 L10.5,305.5 Z"/><circle cx="20" cy="301.5" r="3.5"/></g><g stroke="#ACA899" fill="none" stroke-width="1"><path d="M10.5,298.5 H14.5 V294.5 H22.5 L27.5,299.5 V305.5 L19.5,310.5 V308.5 L10.5,305.5 Z"/><circle cx="20" cy="301.5" r="3.5"/></g></svg>
<svg style="left:0px;top:0px" width="40" height="340" shape-rendering="crispEdges"><g transform="translate(1,1)" stroke="#fff" fill="none" stroke-width="1"><path d="M10.5,333.5 V323.5 H14.5 V318.5 L17.5,321 L16.5,327 L14,333.5 Z M17.5,319.5 H22.5 L27.5,324.5 V332.5 L23.5,334.5 H19.5 L17.5,330 Z"/><path d="M11,335 L17,328 M21,330 L27,321 M19,333 L25,337"/></g><g stroke="#ACA899" fill="none" stroke-width="1"><path d="M10.5,333.5 V323.5 H14.5 V318.5 L17.5,321 L16.5,327 L14,333.5 Z M17.5,319.5 H22.5 L27.5,324.5 V332.5 L23.5,334.5 H19.5 L17.5,330 Z"/><path d="M11,335 L17,328 M21,330 L27,321 M19,333 L25,337"/></g></svg>
<svg style="left:0px;top:0px" width="40" height="370"><path d="M11.4,353.8 L12.9,351.5 L17.5,350 L21,348.8 L24.4,345.4 L28.7,352.3 L26.8,354.6 L21,357 L17.5,358.5 L14.5,361.5 Z" fill="#fff" stroke="#000" stroke-width="1.2" stroke-linejoin="round"/></svg>
<svg style="left:0px;top:0px" width="40" height="400"><path d="M11,378.5 Q14,375.5 21,374 L24.4,370 L27,374 L29,378 Q24,382 16,386 L14.5,390 L11.5,383 Z" fill="#fff" stroke="#000" stroke-width="1.2" stroke-linejoin="round"/><path d="M11.5,381.5 Q20,380 28.5,376.5 M13,384.5 Q20,383 27.5,379.5" fill="none" stroke="#000" stroke-width="1.1"/></svg>
<svg style="left:0px;top:0px" width="40" height="420"><path d="M11.8,398 H15.6 V394.6 H23.7 L28.7,398.8 V405.8 L25.2,408.5 L21,410 H18.7 V411 L17.5,409 L16,407 L13,404.6 H11.8 Z" fill="#fff" stroke="#000" stroke-width="1.2"/></svg>
<svg style="left:0px;top:0px" width="40" height="440"><path d="M11.5,426 L15.5,435.5 M11.5,426.5 L17.5,433 M14.5,420.5 L17.5,432 M14.5,420.5 L23,433 M23.5,420 V435 M23.5,420.5 L28.5,431.5" fill="none" stroke="#000" stroke-width="1.2"/></svg>
<svg style="left:0px;top:0px" width="40" height="470"><path d="M13.3,458.5 Q16,447.5 25.5,446.5" fill="none" stroke="#000" stroke-width="1"/><rect x="12.5" y="458.5" width="2.5" height="2.5" fill="#fff" stroke="#000" stroke-width="1"/><rect x="25.5" y="445" width="2.5" height="2.5" fill="#fff" stroke="#000" stroke-width="1"/></svg>
<svg style="left:0px;top:0px" width="40" height="500"><path d="M11.4,472.7 H15.2 V469.6 H23.7 L29,473.8 V481.5 L22.9,484.2 L18.7,486.5 V484.6 L14.5,481.5 L11.4,477.7 Z" fill="#B0B0B0" stroke="#000" stroke-width="2" stroke-linejoin="miter"/><path d="M17,476.5 H24 M17,481 H24" stroke="#F0F0F0" stroke-width="1.5"/><rect x="17" y="477.5" width="7" height="2.5" fill="#808080"/></svg>
<svg style="left:0px;top:0px" width="40" height="520" shape-rendering="crispEdges"><g transform="translate(1,1)" stroke="#fff" fill="none" stroke-width="1"><path d="M10.5,497.5 H14.5 V494.5 H22.5 L27.5,498.5 V505.5 L19.5,510.5 V508.5 L10.5,505.5 Z" stroke-width="1.6" stroke-dasharray="2 1"/><circle cx="19.5" cy="501.5" r="3.5" stroke-width="1.5"/></g><g stroke="#ACA899" fill="none" stroke-width="1"><path d="M10.5,497.5 H14.5 V494.5 H22.5 L27.5,498.5 V505.5 L19.5,510.5 V508.5 L10.5,505.5 Z" stroke-width="1.6" stroke-dasharray="2 1"/><circle cx="19.5" cy="501.5" r="3.5" stroke-width="1.5"/></g></svg>
<svg style="left:0px;top:0px" width="40" height="560"><path d="M12,531 Q14,529 15.5,532 Q17,535 19,531" fill="none" stroke="#000" stroke-width="1"/><path d="M18,531 L26,522 L29,525 L21,533 Z" fill="#E8E8E8" stroke="#000" stroke-width="1.2"/><path d="M18,531 L21,533 L17.5,534.5 Z" fill="#000"/><path d="M25,537 L29,533 V537 Z" fill="#000"/></svg>
<svg style="left:0px;top:0px" width="40" height="590"><path d="M13,557.5 L21.5,550" stroke="#000" stroke-width="2.6"/><path d="M23.6,545.5 L24.5,548 L27,548.8 L24.8,550 L24.6,552.5 L23,550.8 L20.8,551.2 L22,549 Z" fill="#fff" stroke="#000" stroke-width="0.9"/><path d="M24.3,560.5 L29,556 V560.5 Z" fill="#000"/></svg>
<svg style="left:0px;top:0px" width="40" height="600"><path d="M12,578.5 L26,570" stroke="#000" stroke-width="1.3"/><path d="M15,581.5 L26.5,574.5 M16.5,580.5 V579 M19,579 V577.5 M21.5,577.5 V576 M24,576 V574.5" fill="none" stroke="#000" stroke-width="1"/></svg>
<div class="a" style="left:34px;top:605px;width:20px;height:1px;background:#000"></div>
<svg style="left:0;top:0" width="881" height="652"><path d="M54,605 L59,621.5 L92.5,621.5 L96,605" fill="#FFFBF0" stroke="#000" stroke-width="1.1"/><path d="M96,605 L98,621.5 L129,621.5 L132.4,605" fill="#ECE9D8" stroke="#000" stroke-width="1.1"/><path d="M132.4,605 L134,621.5 L169.5,621.5 L172.4,605" fill="#ECE9D8" stroke="#000" stroke-width="1.1"/><path d="M172.4,605 L174,621.5 L190.5,621.5 L193.7,605" fill="#ECE9D8" stroke="#000" stroke-width="1.1"/><path d="M193.7,605 L195,621.5 L238.7,621.5 L241.8,605" fill="#ECE9D8" stroke="#000" stroke-width="1.1"/><path d="M241.8,605 L243,621.5 L264,621.5 L266.8,605" fill="#ECE9D8" stroke="#000" stroke-width="1.1"/><path d="M266.8,605 L268,621.5 L285.5,621.5 L288.4,605" fill="#ECE9D8" stroke="#000" stroke-width="1.1"/><path d="M288.4,605 L290,621.5 L334.8,621.5 L337.9,605" fill="#ECE9D8" stroke="#000" stroke-width="1.1"/><path d="M337.9,605 L339.5,621.5 L375.7,621.5 L378.4,605" fill="#ECE9D8" stroke="#000" stroke-width="1.1"/><path d="M378.4,605 L380,621.5 L401.2,621.5 L404.3,605" fill="#ECE9D8" stroke="#000" stroke-width="1.1"/><path d="M96,605.5 H424" stroke="#000" stroke-width="1.2"/></svg>
<div class="tab" style="left:59.5px">Normal</div>
<div class="tab" style="left:99px">Image</div>
<div class="tab" style="left:135px">Vectors</div>
<div class="tab" style="left:174.3px">3D</div>
<div class="tab" style="left:195.3px">3D Matte</div>
<div class="tab" style="left:243.4px">Flat</div>
<div class="tab" style="left:269.3px">1:1</div>
<div class="tab" style="left:291px">1:1 Matte</div>
<div class="tab" style="left:340.4px">1:1 Flat</div>
<div class="tab" style="left:380.5px">Sim</div>
<div class="a" style="left:34px;top:623px;width:655px;height:1px;background:#FFFFFF"></div>
<div class="a" style="left:4px;top:624px;width:871px;height:22px;background:linear-gradient(#D8D4C4 0px,#D8D4C4 1px,#8C8878 1px,#8C8878 2px,#C8C4B4 2px,#C8C4B4 3px,#DCD8C8 3px,#DCD8C8 4px,#ECE9D8 4px,#ECE9D8 17px,#DCD8C6 21px,#F0E8D0 21px)"></div>
<div class="t" style="left:6px;top:632px;font-size:10px">X:-50.0</div>
<div class="t" style="left:44px;top:632px;font-size:10px">Y:11.3 mm</div>
<div class="a" style="left:202px;top:629px;width:1px;height:15px;background:#C5C1AC"></div><div class="a" style="left:203px;top:629px;width:1px;height:15px;background:#fff"></div>
<div class="a" style="left:323px;top:629px;width:1px;height:15px;background:#C5C1AC"></div><div class="a" style="left:324px;top:629px;width:1px;height:15px;background:#fff"></div>
<div class="t" style="left:207px;top:632px;font-size:10px">Zoom: 0.25 (66%)</div>
<div class="a" style="left:329px;top:629px;width:52px;height:14px;background:#fff;border:1px solid #000"></div>
<div class="t" style="left:388px;top:632px;font-size:10px">Trace Tool</div>
<svg style="left:863px;top:634px" width="12" height="12"><g fill="#ACA899"><rect x="8" y="0" width="2" height="2"/><rect x="4" y="4" width="2" height="2"/><rect x="8" y="4" width="2" height="2"/><rect x="0" y="8" width="2" height="2"/><rect x="4" y="8" width="2" height="2"/><rect x="8" y="8" width="2" height="2"/></g></svg>
</body></html>
